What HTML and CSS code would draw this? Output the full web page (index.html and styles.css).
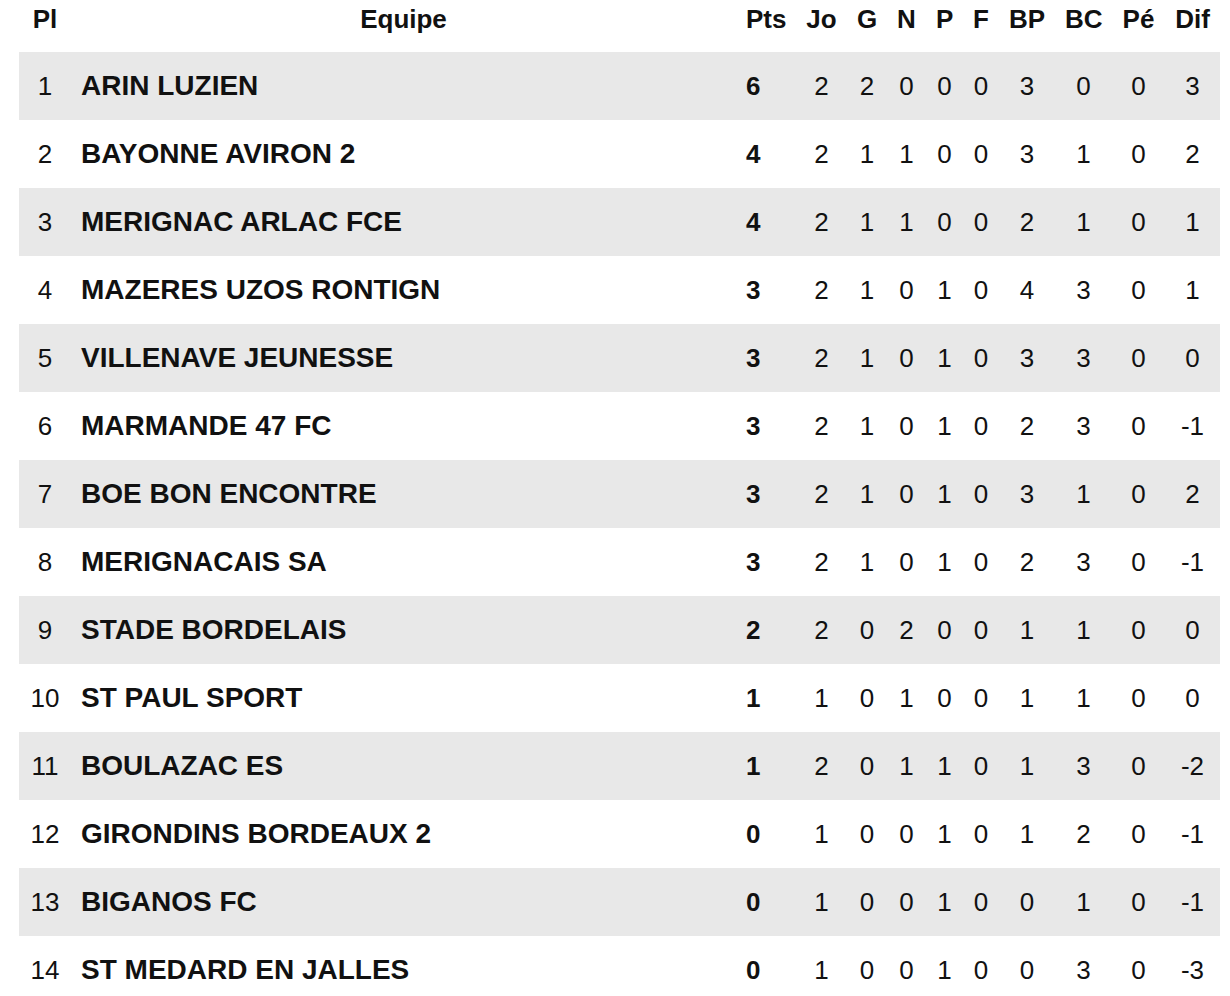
FILE: index.html
```html
<!DOCTYPE html>
<html lang="fr">
<head>
<meta charset="utf-8">
<title>Classement</title>
<link rel="stylesheet" href="styles.css">
</head>
<body>
<table class="standings">
  <colgroup>
    <col class="c-pl"><col class="c-team"><col class="c-pts"><col class="c-jo"><col class="c-g"><col class="c-n"><col class="c-p"><col class="c-f"><col class="c-bp"><col class="c-bc"><col class="c-pe"><col class="c-dif">
  </colgroup>
  <thead>
    <tr><th>Pl</th><th>Equipe</th><th>Pts</th><th>Jo</th><th>G</th><th>N</th><th>P</th><th>F</th><th>BP</th><th>BC</th><th>Pé</th><th>Dif</th></tr>
  </thead>
  <tbody>
    <tr><td>1</td><td class="team">ARIN LUZIEN</td><td class="pts">6</td><td>2</td><td>2</td><td>0</td><td>0</td><td>0</td><td>3</td><td>0</td><td>0</td><td>3</td></tr>
    <tr><td>2</td><td class="team">BAYONNE AVIRON 2</td><td class="pts">4</td><td>2</td><td>1</td><td>1</td><td>0</td><td>0</td><td>3</td><td>1</td><td>0</td><td>2</td></tr>
    <tr><td>3</td><td class="team">MERIGNAC ARLAC FCE</td><td class="pts">4</td><td>2</td><td>1</td><td>1</td><td>0</td><td>0</td><td>2</td><td>1</td><td>0</td><td>1</td></tr>
    <tr><td>4</td><td class="team">MAZERES UZOS RONTIGN</td><td class="pts">3</td><td>2</td><td>1</td><td>0</td><td>1</td><td>0</td><td>4</td><td>3</td><td>0</td><td>1</td></tr>
    <tr><td>5</td><td class="team">VILLENAVE JEUNESSE</td><td class="pts">3</td><td>2</td><td>1</td><td>0</td><td>1</td><td>0</td><td>3</td><td>3</td><td>0</td><td>0</td></tr>
    <tr><td>6</td><td class="team">MARMANDE 47 FC</td><td class="pts">3</td><td>2</td><td>1</td><td>0</td><td>1</td><td>0</td><td>2</td><td>3</td><td>0</td><td>-1</td></tr>
    <tr><td>7</td><td class="team">BOE BON ENCONTRE</td><td class="pts">3</td><td>2</td><td>1</td><td>0</td><td>1</td><td>0</td><td>3</td><td>1</td><td>0</td><td>2</td></tr>
    <tr><td>8</td><td class="team">MERIGNACAIS SA</td><td class="pts">3</td><td>2</td><td>1</td><td>0</td><td>1</td><td>0</td><td>2</td><td>3</td><td>0</td><td>-1</td></tr>
    <tr><td>9</td><td class="team">STADE BORDELAIS</td><td class="pts">2</td><td>2</td><td>0</td><td>2</td><td>0</td><td>0</td><td>1</td><td>1</td><td>0</td><td>0</td></tr>
    <tr><td>10</td><td class="team">ST PAUL SPORT</td><td class="pts">1</td><td>1</td><td>0</td><td>1</td><td>0</td><td>0</td><td>1</td><td>1</td><td>0</td><td>0</td></tr>
    <tr><td>11</td><td class="team">BOULAZAC ES</td><td class="pts">1</td><td>2</td><td>0</td><td>1</td><td>1</td><td>0</td><td>1</td><td>3</td><td>0</td><td>-2</td></tr>
    <tr><td>12</td><td class="team">GIRONDINS BORDEAUX 2</td><td class="pts">0</td><td>1</td><td>0</td><td>0</td><td>1</td><td>0</td><td>1</td><td>2</td><td>0</td><td>-1</td></tr>
    <tr><td>13</td><td class="team">BIGANOS FC</td><td class="pts">0</td><td>1</td><td>0</td><td>0</td><td>1</td><td>0</td><td>0</td><td>1</td><td>0</td><td>-1</td></tr>
    <tr><td>14</td><td class="team">ST MEDARD EN JALLES</td><td class="pts">0</td><td>1</td><td>0</td><td>0</td><td>1</td><td>0</td><td>0</td><td>3</td><td>0</td><td>-3</td></tr>
  </tbody>
</table>
</body>
</html>
```
FILE: styles.css
```css
html, body {
  margin: 0;
  padding: 0;
  background: #ffffff;
}

body {
  padding-left: 19px;
  font-family: "Liberation Sans", Arial, Helvetica, sans-serif;
  color: #111111;
}

.standings {
  width: 1201px;
  table-layout: fixed;
  border-collapse: collapse;
  border-spacing: 0;
  font-size: 26px;
  line-height: 30px;
}

.c-pl { width: 52px; }
.c-team { width: 665px; }
.c-pts { width: 60px; }
.c-jo { width: 51px; }
.c-g { width: 40px; }
.c-n { width: 39px; }
.c-p { width: 37px; }
.c-f { width: 36px; }
.c-bp { width: 56px; }
.c-bc { width: 57px; }
.c-pe { width: 53px; }
.c-dif { width: 55px; }

.standings th {
  padding: 4px 10px 18px;
  font-weight: bold;
  text-align: center;
  white-space: nowrap;
  vertical-align: top;
}

.standings td {
  padding: 19px 10px;
  text-align: center;
  white-space: nowrap;
  vertical-align: middle;
}

.standings tbody tr:nth-child(odd) {
  background: #e8e8e8;
}

.standings td.team {
  text-align: left;
  font-weight: bold;
  font-size: 28px;
  overflow: hidden;
}

.standings td.pts {
  text-align: left;
  font-weight: bold;
}
```
